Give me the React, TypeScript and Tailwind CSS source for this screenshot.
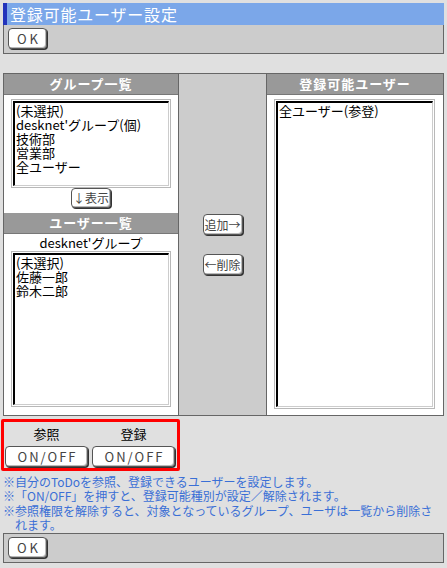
import React from "react";

const font = { fontFamily: '"Noto Sans CJK JP", "Noto Sans", sans-serif' };

function Btn({ children, className = "" }: { children: React.ReactNode; className?: string }) {
  return (
    <div
      className={
        "flex items-center justify-center bg-white border border-[#555] rounded-[4px] shadow-[1px_1px_0_#333,inset_-1px_-1px_0_#bbb] text-[#444] leading-none " +
        className
      }
    >
      {children}
    </div>
  );
}

function ListBox({ items, className = "" }: { items: string[]; className?: string }) {
  return (
    <div className={"border border-[#b8b8b8] p-[1px] bg-white " + className}>
      <div className="h-full border-t-2 border-l-2 border-black border-r border-b border-r-[#ccc] border-b-[#ccc] bg-white pl-[1px] pt-[1px] text-[13px] leading-[14px] text-black">
        {items.map((t) => (
          <div key={t} className="whitespace-nowrap">{t}</div>
        ))}
      </div>
    </div>
  );
}

function Header({ children }: { children: React.ReactNode }) {
  return (
    <div className="h-[21px] bg-[#999999] border-b border-[#777] flex items-center justify-center text-white text-[13px] font-bold tracking-[1px]">
      {children}
    </div>
  );
}

export default function App() {
  return (
    <div style={font} className="w-[447px] h-[568px] bg-[#e0e0e0] pt-[3px] px-[3px] overflow-hidden">
      {/* title */}
      <div className="h-[22px] bg-[#7ba7e9] border-l-[4px] border-[#2233bb] flex items-center pl-[3px] text-white text-[16px] tracking-[0.8px]">
        登録可能ユーザー設定
      </div>
      <div className="h-[29px] bg-[#cccccc] border border-t-0 border-[#666] px-[4px] pt-[3px]">
        <Btn className="w-[39px] h-[21px] text-[13px] tracking-[3px] pl-[3px]">OK</Btn>
      </div>

      {/* main table */}
      <div className="mt-[19px] h-[343px] border border-[#666] flex">
        <div className="w-[175px] bg-white border-r border-[#666] flex flex-col">
          <Header>グループ一覧</Header>
          <ListBox className="mx-[7px] mt-[4px] h-[89px]" items={["(未選択)", "desknet'グループ(個)", "技術部", "営業部", "全ユーザー"]} />
          <div className="flex justify-center">
            <Btn className="w-[40px] h-[20px] text-[12px]">↓表示</Btn>
          </div>
          <div className="mt-[5px]">
            <Header>ユーザー一覧</Header>
          </div>
          <div className="text-center text-[13px] leading-[17px] text-black">desknet'グループ</div>
          <ListBox className="mx-[7px] h-[156px]" items={["(未選択)", "佐藤一郎", "鈴木二郎"]} />
        </div>
        <div className="w-[88px] bg-[#cccccc] border-r border-[#666] flex flex-col items-center pt-[140px] gap-[19px]">
          <Btn className="w-[40px] h-[21px] text-[12px]">追加→</Btn>
          <Btn className="w-[40px] h-[21px] text-[12px]">←削除</Btn>
        </div>
        <div className="flex-1 bg-white flex flex-col">
          <Header>登録可能ユーザー</Header>
          <ListBox className="ml-[7px] mr-[8px] mt-[4px] h-[310px]" items={["全ユーザー(参登)"]} />
        </div>
      </div>

      {/* red box */}
      <div className="mt-[3px] ml-[-2px] w-[179px] h-[52px] border-[3px] border-[#ff0000] rounded-[2px] px-[1px] pt-[3px]">
        <div className="flex gap-[4px]">
          <div className="w-[83px] flex flex-col items-center">
            <div className="text-[13px] leading-[18px] text-black">参照</div>
            <Btn className="mt-[3px] w-[83px] h-[21px] text-[13px] tracking-[2px] pl-[2px]">ON/OFF</Btn>
          </div>
          <div className="w-[83px] flex flex-col items-center">
            <div className="text-[13px] leading-[18px] text-black">登録</div>
            <Btn className="mt-[3px] w-[83px] h-[21px] text-[13px] tracking-[2px] pl-[2px]">ON/OFF</Btn>
          </div>
        </div>
      </div>

      {/* notes */}
      <div className="mt-[4px] pr-[6px] text-[12px] leading-[14.3px] text-[#3a6fd6]">
        <div className="pl-[12px] -indent-[12px]">※自分のToDoを参照、登録できるユーザーを設定します。</div>
        <div className="pl-[12px] -indent-[12px]">※「ON/OFF」を押すと、登録可能種別が設定／解除されます。</div>
        <div className="pl-[12px] -indent-[12px]">※参照権限を解除すると、対象となっているグループ、ユーザは一覧から削除されます。</div>
      </div>

      <div className="mt-[1px] h-[30px] bg-[#cccccc] border border-[#666] px-[4px] pt-[3px]">
        <Btn className="w-[39px] h-[21px] text-[13px] tracking-[3px] pl-[3px]">OK</Btn>
      </div>
    </div>
  );
}
